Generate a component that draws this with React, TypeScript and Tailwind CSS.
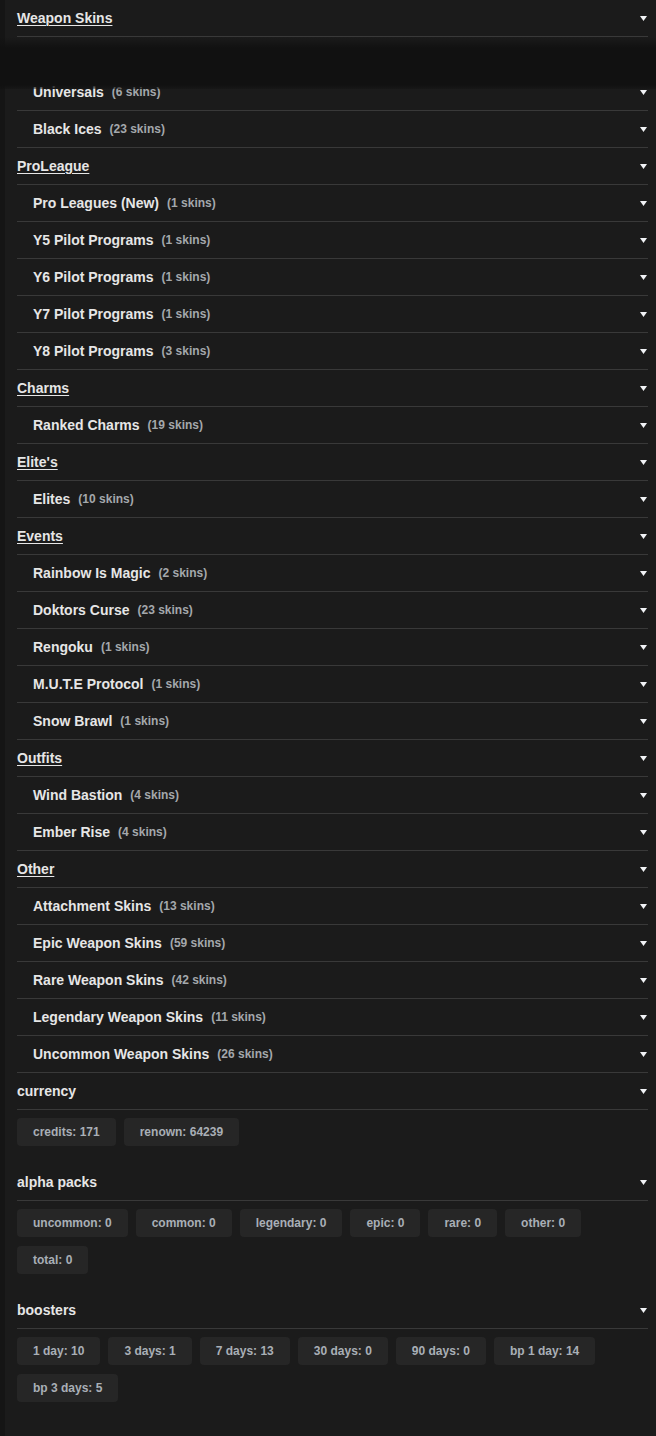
import React from "react";

type Row =
  | { kind: "group"; label: string }
  | { kind: "item"; label: string; count: number };

const rows: Row[] = [
  { kind: "group", label: "Weapon Skins" },
  { kind: "item", label: "Seasonals", count: 1 },
  { kind: "item", label: "Universals", count: 6 },
  { kind: "item", label: "Black Ices", count: 23 },
  { kind: "group", label: "ProLeague" },
  { kind: "item", label: "Pro Leagues (New)", count: 1 },
  { kind: "item", label: "Y5 Pilot Programs", count: 1 },
  { kind: "item", label: "Y6 Pilot Programs", count: 1 },
  { kind: "item", label: "Y7 Pilot Programs", count: 1 },
  { kind: "item", label: "Y8 Pilot Programs", count: 3 },
  { kind: "group", label: "Charms" },
  { kind: "item", label: "Ranked Charms", count: 19 },
  { kind: "group", label: "Elite's" },
  { kind: "item", label: "Elites", count: 10 },
  { kind: "group", label: "Events" },
  { kind: "item", label: "Rainbow Is Magic", count: 2 },
  { kind: "item", label: "Doktors Curse", count: 23 },
  { kind: "item", label: "Rengoku", count: 1 },
  { kind: "item", label: "M.U.T.E Protocol", count: 1 },
  { kind: "item", label: "Snow Brawl", count: 1 },
  { kind: "group", label: "Outfits" },
  { kind: "item", label: "Wind Bastion", count: 4 },
  { kind: "item", label: "Ember Rise", count: 4 },
  { kind: "group", label: "Other" },
  { kind: "item", label: "Attachment Skins", count: 13 },
  { kind: "item", label: "Epic Weapon Skins", count: 59 },
  { kind: "item", label: "Rare Weapon Skins", count: 42 },
  { kind: "item", label: "Legendary Weapon Skins", count: 11 },
  { kind: "item", label: "Uncommon Weapon Skins", count: 26 },
];

const sections: { title: string; chips: string[] }[] = [
  { title: "currency", chips: ["credits: 171", "renown: 64239"] },
  {
    title: "alpha packs",
    chips: [
      "uncommon: 0",
      "common: 0",
      "legendary: 0",
      "epic: 0",
      "rare: 0",
      "other: 0",
      "total: 0",
    ],
  },
  {
    title: "boosters",
    chips: [
      "1 day: 10",
      "3 days: 1",
      "7 days: 13",
      "30 days: 0",
      "90 days: 0",
      "bp 1 day: 14",
      "bp 3 days: 5",
    ],
  },
];

function Caret() {
  return (
    <svg width="7" height="5" viewBox="0 0 7 5" className="mr-px shrink-0">
      <polygon points="0,0 7,0 3.5,5" fill="#f1f3f6" />
    </svg>
  );
}

export default function App() {
  return (
    <div className="relative min-h-screen bg-[#151515] pl-[5px] font-['Liberation_Sans',Arial,sans-serif]">
      <div className="min-h-[1436px] bg-[#1b1b1b] pl-3 pr-2 pb-8">
        {rows.map((r, i) =>
          r.kind === "group" ? (
            <div
              key={i}
              className="flex h-[37px] items-center justify-between border-b border-[#393939]"
            >
              <span className="text-[14px] font-bold text-[#e6e6e6] underline decoration-1 underline-offset-[2px]">
                {r.label}
              </span>
              <Caret />
            </div>
          ) : (
            <div
              key={i}
              className="flex h-[37px] items-center justify-between border-b border-[#393939] pl-4"
            >
              <span className="flex items-center">
                <span className="text-[14px] font-bold text-[#e6e6e6]">{r.label}</span>
                <span className="ml-2 text-[12px] font-bold text-[#a4a8ac]">
                  ({r.count} skins)
                </span>
              </span>
              <Caret />
            </div>
          )
        )}

        {sections.map((s) => (
          <div key={s.title}>
            <div className="flex h-[37px] items-center justify-between border-b border-[#393939]">
              <span className="text-[14px] font-bold text-[#e6e6e6]">{s.title}</span>
              <Caret />
            </div>
            <div className="flex flex-wrap gap-x-2 gap-y-[9px] pt-2 pb-[18px]">
              {s.chips.map((c) => (
                <div
                  key={c}
                  className="flex h-[28px] items-center rounded-[4px] bg-[#262626] px-4 pb-px text-[12px] font-bold text-[#a9afb6]"
                >
                  {c}
                </div>
              ))}
            </div>
          </div>
        ))}
      </div>

      <div className="pointer-events-none absolute inset-x-0 top-[37px] h-[52px] bg-[linear-gradient(to_bottom,rgba(17,17,17,0)_0px,#111111_11px,#111111_48px,rgba(17,17,17,0.4)_52px)]" />
    </div>
  );
}
